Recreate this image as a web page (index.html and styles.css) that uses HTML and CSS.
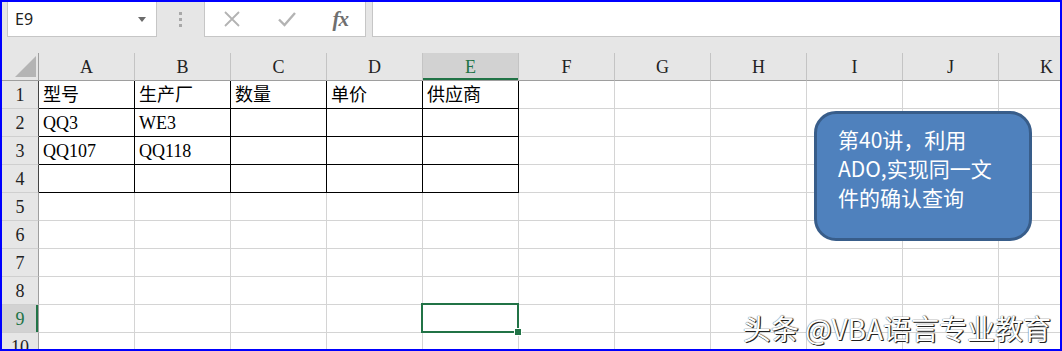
FILE: index.html
```html
<!DOCTYPE html>
<html>
<head>
<meta charset="utf-8">
<link rel="stylesheet" href="styles.css">
</head>
<body>
<div class="frame">
  <div class="toolbar">
    <div class="namebox">
      <span class="ref">E9</span>
      <svg class="caret" width="8" height="5" viewBox="0 0 8 5"><path d="M0 0H8L4 5Z" fill="#6b6b6b"/></svg>
    </div>
    <div class="grip"><i></i><i></i><i></i></div>
    <div class="fbtns">
      <svg class="ico" width="18" height="18" viewBox="0 0 18 18"><path d="M2 2L16 16M16 2L2 16" stroke="#b3b3b3" stroke-width="1.8" fill="none"/></svg>
      <svg class="ico" width="20" height="18" viewBox="0 0 20 18"><path d="M2 9.5L7.5 15L18 3" stroke="#b3b3b3" stroke-width="2.4" fill="none"/></svg>
      <span class="fx">fx</span>
    </div>
    <div class="formula"></div>
  </div>

  <div class="sheet">
    <div class="row hdr">
      <div class="rh corner"><svg width="21" height="21" viewBox="0 0 21 21"><path d="M21 0V21H0Z" fill="#b4b4b4"/></svg></div>
      <div class="ch">A</div><div class="ch">B</div><div class="ch">C</div><div class="ch">D</div><div class="ch sel">E</div><div class="ch">F</div><div class="ch">G</div><div class="ch">H</div><div class="ch">I</div><div class="ch">J</div><div class="ch">K</div>
    </div>
    <div class="row">
      <div class="rh dark">1</div>
      <div class="c b">型号</div><div class="c b">生产厂</div><div class="c b">数量</div><div class="c b">单价</div><div class="c b">供应商</div>
      <div class="c"></div><div class="c"></div><div class="c"></div><div class="c"></div><div class="c"></div><div class="c"></div>
    </div>
    <div class="row">
      <div class="rh dark">2</div>
      <div class="c b">QQ3</div><div class="c b">WE3</div><div class="c b"></div><div class="c b"></div><div class="c b"></div>
      <div class="c"></div><div class="c"></div><div class="c"></div><div class="c"></div><div class="c"></div><div class="c"></div>
    </div>
    <div class="row">
      <div class="rh dark">3</div>
      <div class="c b">QQ107</div><div class="c b">QQ118</div><div class="c b"></div><div class="c b"></div><div class="c b"></div>
      <div class="c"></div><div class="c"></div><div class="c"></div><div class="c"></div><div class="c"></div><div class="c"></div>
    </div>
    <div class="row">
      <div class="rh dark">4</div>
      <div class="c b"></div><div class="c b"></div><div class="c b"></div><div class="c b"></div><div class="c b"></div>
      <div class="c"></div><div class="c"></div><div class="c"></div><div class="c"></div><div class="c"></div><div class="c"></div>
    </div>
    <div class="row">
      <div class="rh">5</div>
      <div class="c"></div><div class="c"></div><div class="c"></div><div class="c"></div><div class="c"></div><div class="c"></div><div class="c"></div><div class="c"></div><div class="c"></div><div class="c"></div><div class="c"></div>
    </div>
    <div class="row">
      <div class="rh">6</div>
      <div class="c"></div><div class="c"></div><div class="c"></div><div class="c"></div><div class="c"></div><div class="c"></div><div class="c"></div><div class="c"></div><div class="c"></div><div class="c"></div><div class="c"></div>
    </div>
    <div class="row">
      <div class="rh">7</div>
      <div class="c"></div><div class="c"></div><div class="c"></div><div class="c"></div><div class="c"></div><div class="c"></div><div class="c"></div><div class="c"></div><div class="c"></div><div class="c"></div><div class="c"></div>
    </div>
    <div class="row">
      <div class="rh">8</div>
      <div class="c"></div><div class="c"></div><div class="c"></div><div class="c"></div><div class="c"></div><div class="c"></div><div class="c"></div><div class="c"></div><div class="c"></div><div class="c"></div><div class="c"></div>
    </div>
    <div class="row">
      <div class="rh rsel">9</div>
      <div class="c"></div><div class="c"></div><div class="c"></div><div class="c"></div><div class="c active"></div><div class="c"></div><div class="c"></div><div class="c"></div><div class="c"></div><div class="c"></div><div class="c"></div>
    </div>
    <div class="row">
      <div class="rh">10</div>
      <div class="c"></div><div class="c"></div><div class="c"></div><div class="c"></div><div class="c"></div><div class="c"></div><div class="c"></div><div class="c"></div><div class="c"></div><div class="c"></div><div class="c"></div>
    </div>
  </div>

  <div class="callout">第40讲，利用<br>ADO,实现同一文<br>件的确认查询</div>
  <div class="watermark">头条 @VBA语言专业教育</div>
</div>
</body>
</html>
```

FILE: styles.css
```css
html, body {
  margin: 0;
  padding: 0;
}
body {
  width: 1062px;
  height: 351px;
  overflow: hidden;
  background: #ffffff;
}
.frame {
  position: relative;
  box-sizing: border-box;
  width: 1062px;
  height: 351px;
  border: 2px solid #0000ff;
  overflow: hidden;
  background: #e6e6e6;
}

/* toolbar */
.toolbar {
  height: 51px;
  display: flex;
  align-items: flex-start;
  background: #e6e6e6;
}
.namebox {
  box-sizing: border-box;
  margin-left: 5px;
  width: 150px;
  height: 35px;
  background: #fff;
  border: 1px solid #c6c6c6;
  border-top: none;
  display: flex;
  align-items: center;
  justify-content: space-between;
  padding: 0 10px 0 7px;
}
.ref {
  font-family: "Noto Sans", "Open Sans", sans-serif;
  font-size: 16px;
  color: #222;
}
.caret {
  margin-top: 1px;
}
.grip {
  width: 47px;
  height: 35px;
  display: flex;
  flex-direction: column;
  align-items: center;
  justify-content: center;
  gap: 3px;
}
.grip i {
  display: block;
  width: 3px;
  height: 3px;
  background: #a8a8a8;
}
.fbtns {
  box-sizing: border-box;
  width: 162px;
  height: 35px;
  background: #fff;
  border: 1px solid #c6c6c6;
  border-top: none;
  display: flex;
  align-items: center;
  justify-content: space-between;
  padding: 0 17px 0 18px;
}
.fx {
  font-family: "Liberation Serif", serif;
  font-style: italic;
  font-weight: bold;
  font-size: 21px;
  color: #6f6f6f;
  letter-spacing: -1px;
}
.formula {
  box-sizing: border-box;
  margin-left: 6px;
  flex: 1;
  height: 35px;
  background: #fff;
  border: 1px solid #c6c6c6;
  border-top: none;
  border-right: none;
}

/* sheet */
.sheet {
  background: #fff;
  width: 1093px;
}
.row {
  display: flex;
  height: 28px;
}
.rh, .ch, .c {
  box-sizing: border-box;
  flex: none;
  height: 28px;
}
.rh {
  width: 37px;
  background: #e6e6e6;
  border-right: 1px solid #9e9e9e;
  border-bottom: 1px solid #cfcfcf;
  font-family: "Liberation Serif", serif;
  font-size: 18px;
  color: #222;
  display: flex;
  align-items: flex-end;
  justify-content: center;
  padding-bottom: 2px;
  line-height: 22px;
}
.rh.dark {
  border-right-color: #444;
}
.rh.rsel {
  background: #d2d2d2;
  color: #217346;
  box-shadow: inset -2px 0 0 #217346;
}
.hdr .rh {
  border-bottom: 1px solid #9e9e9e;
  align-items: flex-end;
  justify-content: flex-end;
  padding: 0 2px 3px 0;
}
.ch {
  width: 96px;
  background: #e6e6e6;
  border-right: 1px solid #c4c4c4;
  border-bottom: 1px solid #9e9e9e;
  font-family: "Liberation Serif", serif;
  font-size: 18px;
  color: #222;
  display: flex;
  align-items: flex-end;
  justify-content: center;
  padding-bottom: 3px;
  line-height: 20px;
}
.ch.sel {
  background: #d2d2d2;
  color: #217346;
  box-shadow: inset 0 -2px 0 #217346;
}
.c {
  width: 96px;
  border-right: 1px solid #d4d4d4;
  border-bottom: 1px solid #d4d4d4;
  font-family: "Liberation Serif", "Noto Sans CJK SC", serif;
  font-size: 18px;
  color: #000;
  display: flex;
  align-items: flex-end;
  padding: 0 0 2px 4px;
  line-height: 22px;
  white-space: nowrap;
}
.c.b {
  border-right-color: #000;
  border-bottom-color: #000;
}
.c.active {
  position: relative;
}
.c.active::before {
  content: "";
  position: absolute;
  left: -2px;
  top: -2px;
  right: -1px;
  bottom: -1px;
  border: 2px solid #217346;
}
.c.active::after {
  content: "";
  position: absolute;
  right: -3px;
  bottom: -3px;
  width: 6px;
  height: 6px;
  background: #217346;
  box-shadow: 0 0 0 1px #fff;
}

/* overlays */
.callout {
  position: absolute;
  left: 812px;
  top: 109px;
  width: 218px;
  height: 130px;
  box-sizing: border-box;
  background: #4f81bd;
  border: 3px solid #385d8a;
  border-radius: 22px;
  padding: 11px 0 0 21px;
  font-family: "Noto Sans CJK SC", "Noto Sans", sans-serif;
  font-size: 21px;
  line-height: 29px;
  color: #fff;
}
.watermark {
  position: absolute;
  right: 9px;
  top: 308px;
  font-family: "Noto Sans CJK SC", "Noto Sans", sans-serif;
  font-size: 28px;
  line-height: 36px;
  color: #fff;
  white-space: nowrap;
  text-shadow: 1px 1px 0 #222, 0 0 1px #333, 1px 0 1px #444;
}
```
